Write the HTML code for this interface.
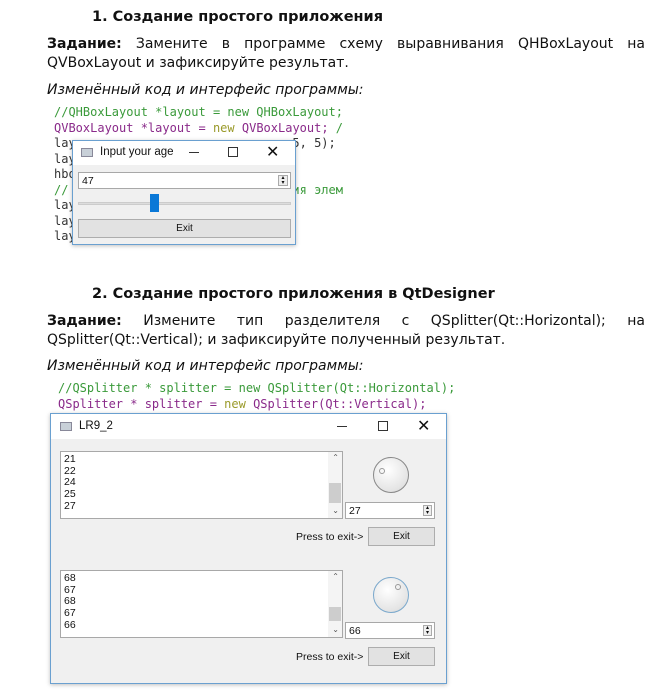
<!DOCTYPE html>
<html><head><meta charset="utf-8"><style>
*{margin:0;padding:0;box-sizing:border-box}
body{width:666px;height:699px;background:#fff;position:relative;overflow:hidden;font-family:"Liberation Sans","DejaVu Sans",sans-serif;color:#111}
.a{position:absolute;white-space:nowrap}
h{position:absolute;font-weight:bold;font-size:14.5px;font-family:"DejaVu Sans",sans-serif}
.p{position:absolute;left:47px;width:598px;font-size:14px;font-family:"DejaVu Sans",sans-serif;text-align:justify;text-align-last:justify;white-space:nowrap}
.i{position:absolute;left:47px;font-size:14px;font-style:italic;font-family:"DejaVu Sans",sans-serif}
.c{position:absolute;font-family:"DejaVu Sans Mono","Liberation Mono",monospace;font-size:12px;color:#333;white-space:pre}
.g{color:#3a9a3a}.m{color:#8a2a8a}.y{color:#9a9a2a}
.win{position:absolute;background:#f0f0f0;border:1px solid #6aa0d0;box-shadow:0 1px 4px rgba(0,0,0,.25)}
.tb{position:absolute;left:0;right:0;top:0;background:#fff;font-size:11.5px}
.box{position:absolute;background:#fff;border:1px solid #a8a8a8;overflow:hidden}
.btn{position:absolute;background:#e2e2e2;border:1px solid #adadad;font-size:10px;text-align:center}
.sm{font-size:10.5px}
</style></head><body>
<h style="left:92px;top:9px">1. Создание простого приложения</h>
<div class="p" style="top:36px"><b>Задание:</b> Замените в программе схему выравнивания QHBoxLayout на</div>
<div class="p" style="top:55px;text-align-last:left">QVBoxLayout и зафиксируйте результат.</div>
<div class="i" style="top:82px">Изменённый код и интерфейс программы:</div>

<div class="c" style="left:54px;top:105px;line-height:15.5px"><span class="g">//QHBoxLayout *layout = new QHBoxLayout;</span>
<span class="m">QVBoxLayout *layout = </span><span class="y">new</span><span class="m"> QVBoxLayout;</span> <span class="g">/</span>
lay                              5, 5);
lay
hbo
<span class="g">//                               ия элем</span>
lay
lay
lay</div>

<div class="win" style="left:72px;top:140px;width:224px;height:105px">
 <div class="tb" style="height:24px">
  <div class="a" style="left:8px;top:7px;width:12px;height:9px;background:#c8d0d8;border:1px solid #889"></div>
  <div class="a" style="left:27px;top:5px">Input your age</div>
  <div class="a" style="left:116px;top:11px;width:10px;border-top:1px solid #333"></div>
  <div class="a" style="left:155px;top:6px;width:10px;height:10px;border:1px solid #333"></div>
  <div class="a" style="left:193px;top:1px;font-size:16px">✕</div>
 </div>
 <div class="box" style="left:5px;top:31px;width:213px;height:17px"><span class="a sm" style="left:3px;top:2px">47</span><span class="a" style="right:2px;top:2px;width:10px;height:11px;background:#eee;border:1px solid #aaa;font-size:6px;line-height:5px;text-align:center">▴<br>▾</span></div>
 <div class="a" style="left:5px;top:61px;width:213px;height:3px;background:#ddd;border:1px solid #ccc"></div>
 <div class="a" style="left:77px;top:53px;width:9px;height:18px;background:#0a78d7"></div>
 <div class="btn" style="left:5px;top:78px;width:213px;height:19px;line-height:17px">Exit</div>
</div>

<h style="left:92px;top:286px">2. Создание простого приложения в QtDesigner</h>
<div class="p" style="top:313px"><b>Задание:</b> Измените тип разделителя с QSplitter(Qt::Horizontal); на</div>
<div class="p" style="top:332px;text-align-last:left">QSplitter(Qt::Vertical); и зафиксируйте полученный результат.</div>
<div class="i" style="top:358px">Изменённый код и интерфейс программы:</div>
<div class="c" style="left:58px;top:380px;line-height:16px"><span class="g">//QSplitter * splitter = new QSplitter(Qt::Horizontal);</span>
<span class="m">QSplitter * splitter = </span><span class="y">new</span><span class="m"> QSplitter(Qt::Vertical);</span></div>

<div class="win" style="left:50px;top:413px;width:397px;height:271px">
 <div class="tb" style="height:25px">
  <div class="a" style="left:9px;top:8px;width:12px;height:9px;background:#c8d0d8;border:1px solid #889"></div>
  <div class="a" style="left:28px;top:6px">LR9_2</div>
  <div class="a" style="left:286px;top:12px;width:10px;border-top:1px solid #333"></div>
  <div class="a" style="left:327px;top:7px;width:10px;height:10px;border:1px solid #333"></div>
  <div class="a" style="left:366px;top:2px;font-size:16px">✕</div>
 </div>
 <div class="box" style="left:9px;top:37px;width:283px;height:68px">
  <div class="a sm" style="left:3px;top:-10px;line-height:11.8px">20<br>21<br>22<br>24<br>25<br>27</div>
  <div class="a" style="right:0;top:0;width:14px;height:66px;background:#f4f4f4"></div>
  <div class="a" style="right:1px;top:31px;width:12px;height:20px;background:#cdcdcd"></div>
  <div class="a" style="right:3px;top:1px;font-size:8px;color:#555">⌃</div>
  <div class="a" style="right:3px;top:54px;font-size:8px;color:#555">⌄</div>
 </div>
 <div class="a" style="left:322px;top:43px;width:36px;height:36px;border-radius:50%;border:1px solid #888;background:radial-gradient(circle at 40% 35%,#fff,#e4e4e4 70%,#ccc)"><div class="a" style="left:5px;top:10px;width:6px;height:6px;border-radius:50%;border:1px solid #999"></div></div>
 <div class="box" style="left:294px;top:88px;width:90px;height:17px"><span class="a sm" style="left:3px;top:2px">27</span><span class="a" style="right:2px;top:2px;width:9px;height:11px;background:#eee;border:1px solid #aaa;font-size:6px;line-height:5px;text-align:center">▴<br>▾</span></div>
 <div class="a sm" style="left:245px;top:117px">Press to exit-&gt;</div>
 <div class="btn" style="left:317px;top:113px;width:67px;height:19px;line-height:17px">Exit</div>
 <div class="box" style="left:9px;top:156px;width:283px;height:68px">
  <div class="a sm" style="left:3px;top:-10px;line-height:11.8px">69<br>68<br>67<br>68<br>67<br>66</div>
  <div class="a" style="right:0;top:0;width:14px;height:66px;background:#f4f4f4"></div>
  <div class="a" style="right:1px;top:36px;width:12px;height:14px;background:#cdcdcd"></div>
  <div class="a" style="right:3px;top:1px;font-size:8px;color:#555">⌃</div>
  <div class="a" style="right:3px;top:54px;font-size:8px;color:#555">⌄</div>
 </div>
 <div class="a" style="left:322px;top:163px;width:36px;height:36px;border-radius:50%;border:1px solid #7aa8cc;background:radial-gradient(circle at 40% 35%,#fff,#e4e4e4 70%,#ccc)"><div class="a" style="left:21px;top:6px;width:6px;height:6px;border-radius:50%;border:1px solid #999"></div></div>
 <div class="box" style="left:294px;top:208px;width:90px;height:17px"><span class="a sm" style="left:3px;top:2px">66</span><span class="a" style="right:2px;top:2px;width:9px;height:11px;background:#eee;border:1px solid #aaa;font-size:6px;line-height:5px;text-align:center">▴<br>▾</span></div>
 <div class="a sm" style="left:245px;top:237px">Press to exit-&gt;</div>
 <div class="btn" style="left:317px;top:233px;width:67px;height:19px;line-height:17px">Exit</div>
</div>
</body></html>
